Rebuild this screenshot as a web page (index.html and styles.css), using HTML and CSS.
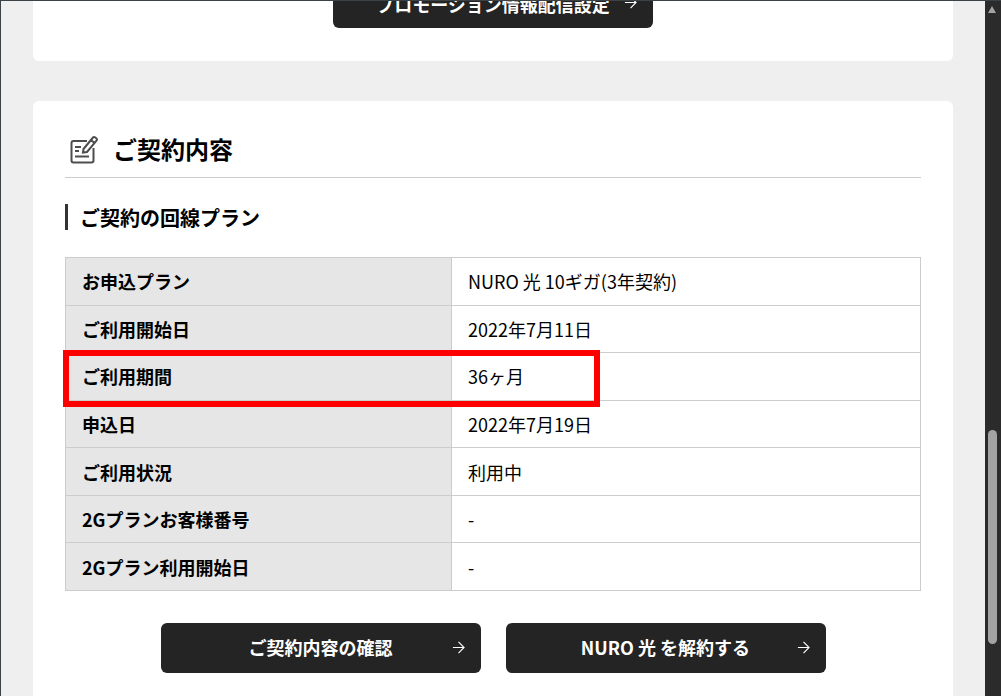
FILE: index.html
```html
<!DOCTYPE html>
<html lang="ja">
<head>
<meta charset="utf-8">
<title>ご契約内容</title>
<link rel="stylesheet" href="styles.css">
</head>
<body>
<div class="window">
  <main class="page">
    <section class="card card-top">
      <a class="btn btn-clipped"><span class="btn-label">プロモーション情報配信設定</span>
        <svg class="arrow" viewBox="0 0 14 14"><path d="M1 7H13M7 1L13 7L7 13"/></svg></a>
    </section>
    <section class="card card-main">
      <h2 class="heading">
        <svg class="heading-icon" viewBox="0 0 28 28">
          <path class="ic" d="M17 6H3.500A2 2 0 0 0 1.500 8V25.500A2 2 0 0 0 3.500 27.500H21.500A2 2 0 0 0 23.500 25.500V13"/>
          <path class="ic" d="M5 12H11M5 16H9M5 21.500H19"/>
          <path class="ic" d="M13 17.500L13.500 14L23 2.500A1.500 1.500 0 0 1 25 2.300L26.500 3.500A1.500 1.500 0 0 1 26.700 5.500L17 17L13 17.500ZM21 5L24.500 8"/>
        </svg>
        <span>ご契約内容</span>
      </h2>
      <h3 class="subheading">ご契約の回線プラン</h3>
      <div class="table-wrap">
        <table class="plan">
          <tr><th>お申込プラン</th><td>NURO 光 10ギガ(3年契約)</td></tr>
          <tr><th>ご利用開始日</th><td>2022年7月11日</td></tr>
          <tr><th>ご利用期間</th><td>36ヶ月</td></tr>
          <tr><th>申込日</th><td>2022年7月19日</td></tr>
          <tr><th>ご利用状況</th><td>利用中</td></tr>
          <tr><th>2Gプランお客様番号</th><td>-</td></tr>
          <tr><th>2Gプラン利用開始日</th><td>-</td></tr>
        </table>
        <div class="highlight"></div>
      </div>
      <div class="actions">
        <a class="btn"><span class="btn-label">ご契約内容の確認</span>
          <svg class="arrow" viewBox="0 0 14 14"><path d="M1 7H13M7 1L13 7L7 13"/></svg></a>
        <a class="btn"><span class="btn-label">NURO 光 を解約する</span>
          <svg class="arrow" viewBox="0 0 14 14"><path d="M1 7H13M7 1L13 7L7 13"/></svg></a>
      </div>
    </section>
  </main>
  <div class="scrollbar">
    <div class="scroll-up"></div>
    <div class="scroll-thumb"></div>
  </div>
</div>
</body>
</html>
```

FILE: styles.css
```css
* { box-sizing: border-box; }
html, body { margin: 0; height: 100%; overflow: hidden; }
body {
  font-family: "Noto Sans CJK JP", "Noto Sans", sans-serif;
  color: #000;
  background: #efefef;
}
.window {
  display: flex;
  width: 1001px;
  height: 696px;
  border-top: 1px solid #3c4146;
  border-left: 1px solid #3c4146;
}
.page {
  flex: 1;
  min-width: 0;
  padding: 0 32px;
  background: #efefef;
  overflow: hidden;
}
.card {
  background: #fff;
  border-radius: 6px;
}
.card-top {
  display: flex;
  justify-content: center;
  margin-top: -23px;
  margin-bottom: 40px;
  padding-bottom: 33px;
}
.card-main {
  padding: 32px 32px 40px;
}
.btn {
  position: relative;
  display: flex;
  align-items: center;
  justify-content: center;
  width: 320px;
  height: 50px;
  padding-bottom: 1px;
  border-radius: 6px;
  background: #242424;
  color: #fff;
  font-size: 18px;
  font-weight: 700;
}
.btn-clipped {
  padding-bottom: 0;
  padding-top: 1px;
}
.arrow {
  position: absolute;
  right: 16px;
  top: 18px;
  width: 13px;
  height: 13px;
  fill: none;
  stroke: #fff;
  stroke-width: 1.200;
}
.heading {
  display: flex;
  align-items: center;
  gap: 15px;
  height: 45px;
  margin: 0;
  padding: 0 0 12px 5px;
  border-bottom: 1px solid #ccc;
  font-size: 24px;
  font-weight: 700;
  line-height: 34px;
}
.heading-icon {
  width: 28px;
  height: 28px;
  flex: none;
  overflow: visible;
}
.ic {
  fill: none;
  stroke: #4d4d4d;
  stroke-width: 2;
}
.subheading {
  height: 26px;
  margin: 26px 0 27px;
  padding-left: 12px;
  border-left: 3px solid #333;
  font-size: 20px;
  font-weight: 700;
  line-height: 27px;
}
.table-wrap {
  position: relative;
}
.plan {
  width: 100%;
  border-collapse: collapse;
  table-layout: fixed;
  font-size: 18px;
}
.plan tr {
  height: 47.57px;
}
.plan th, .plan td {
  padding: 0 16px;
  border: 1px solid #ccc;
  text-align: left;
  line-height: 26px;
}
.plan th {
  width: 386px;
  background: #e6e6e6;
  font-weight: 700;
}
.plan td {
  font-weight: 400;
}
.highlight {
  position: absolute;
  left: -2px;
  top: 93px;
  width: 537px;
  height: 57px;
  border: 6px solid #f00;
}
.actions {
  display: flex;
  justify-content: center;
  gap: 25px;
  margin-top: 32px;
}
.scrollbar {
  position: relative;
  flex: none;
  width: 16px;
  background: #2b2b2b;
}
.scroll-up {
  position: absolute;
  left: 3px;
  top: 5px;
  width: 0;
  height: 0;
  border-left: 4.500px solid transparent;
  border-right: 4.500px solid transparent;
  border-bottom: 7px solid #a3a3a3;
}
.scroll-thumb {
  position: absolute;
  left: 3px;
  top: 429px;
  width: 9px;
  height: 214px;
  border-radius: 5px;
  background: #a3a3a3;
}
```
